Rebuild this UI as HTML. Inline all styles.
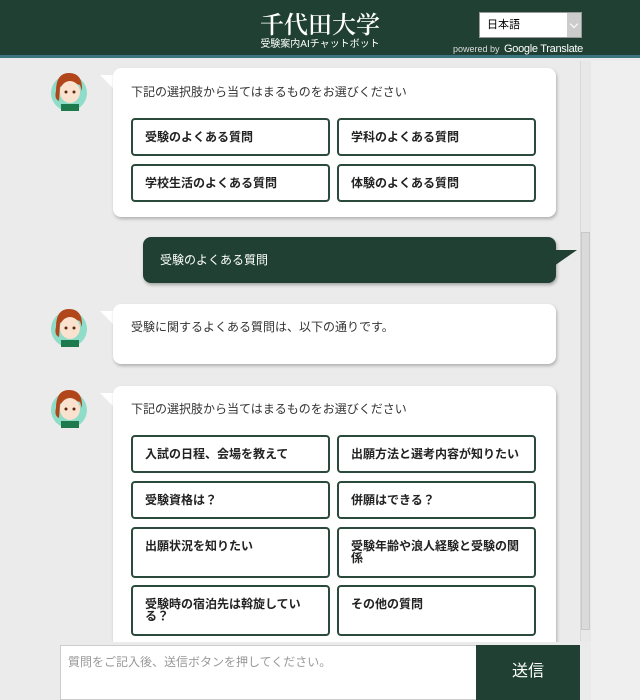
<!DOCTYPE html>
<html><head><meta charset="utf-8"><style>
*{margin:0;padding:0;box-sizing:border-box}
body{width:640px;height:700px;overflow:hidden;background:#ebebeb;font-family:"Liberation Sans","Noto Sans CJK JP",sans-serif;position:relative}
.hdr{position:absolute;left:0;top:0;width:640px;height:58px;background:#1f4033;border-bottom:3px solid #3b7580}
.title{position:absolute;left:0;width:640px;top:9px;text-align:center;color:#fff;font-family:"Noto Serif CJK SC","Liberation Serif",serif;font-size:24px;line-height:28px;font-weight:600}
.sub{position:absolute;left:0;width:640px;top:39px;text-align:center;color:#fff;font-size:10px;line-height:12px}
.sel{position:absolute;left:479px;top:12px;width:103px;height:26px;background:#fff;border:1px solid #999;font-size:11px;line-height:24px;padding-left:7px;color:#000}
.sel .arr{position:absolute;right:0;top:0;width:14px;height:24px;background:#ccc}
.sel .arr:after{content:"";position:absolute;left:4px;top:8px;width:5px;height:5px;border-right:1px solid #fff;border-bottom:1px solid #fff;transform:rotate(45deg)}
.pw{position:absolute;left:453px;top:43px;color:#ddd;font-size:9px;line-height:12px}
.pw b{font-size:11px;color:#fff;font-weight:normal;margin-left:2px;letter-spacing:-0.3px}
.right{position:absolute;left:591px;top:61px;width:49px;height:639px;background:#efefef}
.track{position:absolute;left:580px;top:61px;width:11px;height:580px;background:#e8e8e8;border-left:1px solid #d8d8d8}
.thumb{position:absolute;left:581px;top:232px;width:9px;height:398px;background:#dadada;border:1px solid #c8c8c8}
.clip{position:absolute;left:0;top:61px;width:580px;height:581px;overflow:hidden}
.bub{position:absolute;left:113px;width:443px;background:#fff;border-radius:8px;box-shadow:1px 2px 3px rgba(0,0,0,.25)}
.tail{position:absolute;left:100px;width:0;height:0;border-top:14px solid #fff;border-left:14px solid transparent}
.txt{position:absolute;left:18px;font-size:12px;color:#333;line-height:14px}
.btn{position:absolute;width:199px;border:2px solid #2a4a3c;border-radius:4px;background:#fff;font-size:12px;font-weight:bold;color:#222;padding:11px 12px 0 12px;line-height:12px}
.av{position:absolute;left:50px;width:38px;height:40px}
.user{position:absolute;left:143px;top:176px;width:413px;height:46px;background:#1f4033;border-radius:8px;box-shadow:1px 2px 3px rgba(0,0,0,.3);color:#fff;font-size:12px;line-height:46px;padding-left:17px}
.utail{position:absolute;left:554px;top:189px;width:0;height:0;border-top:16px solid #1f4033;border-right:23px solid transparent}
.in{position:absolute;left:60px;top:645px;width:417px;height:55px;background:#fff;border:1px solid #ccc;font-size:12px;color:#999;padding:7px 7px}
.send{position:absolute;left:476px;top:645px;width:104px;height:55px;background:#1f4033;color:#fff;font-size:16px;text-align:center;line-height:54px}
</style></head><body>
<div class="hdr"></div>
<div class="title">千代田大学</div>
<div class="sub">受験案内AIチャットボット</div>
<div class="sel">日本語<div class="arr"></div></div>
<div class="pw">powered by <b>Google Translate</b></div>
<div class="right"></div>
<div class="track"></div><div class="thumb"></div>

<div class="clip">
<svg class="av" style="top:10px" viewBox="0 0 38 40"><ellipse cx="19" cy="22" rx="18" ry="18" fill="#8fdcc8"/><path d="M6 20 Q6 2 19 2 Q33 2 32 20 L30 14 Q19 10 10 16 L9 30 Q4 28 6 20Z" fill="#b1461a"/><ellipse cx="20" cy="21" rx="10" ry="11" fill="#fbe2cf"/><rect x="11" y="33" width="18" height="7" fill="#1c7a4c"/><circle cx="16" cy="21" r="1.5" fill="#5a2a10"/><circle cx="24" cy="21" r="1.5" fill="#5a2a10"/></svg>
<div class="tail" style="top:14px"></div>
<div class="bub" style="top:7px;height:149px">
<div class="txt" style="top:17px">下記の選択肢から当てはまるものをお選びください</div>
<div class="btn" style="left:18px;top:50px;height:38px">受験のよくある質問</div>
<div class="btn" style="left:224px;top:50px;height:38px">学科のよくある質問</div>
<div class="btn" style="left:18px;top:96px;height:38px">学校生活のよくある質問</div>
<div class="btn" style="left:224px;top:96px;height:38px">体験のよくある質問</div>
</div>

<div class="user">受験のよくある質問</div>
<div class="utail"></div>

<svg class="av" style="top:246px" viewBox="0 0 38 40"><ellipse cx="19" cy="22" rx="18" ry="18" fill="#8fdcc8"/><path d="M6 20 Q6 2 19 2 Q33 2 32 20 L30 14 Q19 10 10 16 L9 30 Q4 28 6 20Z" fill="#b1461a"/><ellipse cx="20" cy="21" rx="10" ry="11" fill="#fbe2cf"/><rect x="11" y="33" width="18" height="7" fill="#1c7a4c"/><circle cx="16" cy="21" r="1.5" fill="#5a2a10"/><circle cx="24" cy="21" r="1.5" fill="#5a2a10"/></svg>
<div class="tail" style="top:250px"></div>
<div class="bub" style="top:243px;height:60px">
<div class="txt" style="top:16px">受験に関するよくある質問は、以下の通りです。</div>
</div>

<svg class="av" style="top:327px" viewBox="0 0 38 40"><ellipse cx="19" cy="22" rx="18" ry="18" fill="#8fdcc8"/><path d="M6 20 Q6 2 19 2 Q33 2 32 20 L30 14 Q19 10 10 16 L9 30 Q4 28 6 20Z" fill="#b1461a"/><ellipse cx="20" cy="21" rx="10" ry="11" fill="#fbe2cf"/><rect x="11" y="33" width="18" height="7" fill="#1c7a4c"/><circle cx="16" cy="21" r="1.5" fill="#5a2a10"/><circle cx="24" cy="21" r="1.5" fill="#5a2a10"/></svg>
<div class="tail" style="top:332px"></div>
<div class="bub" style="top:325px;height:272px">
<div class="txt" style="top:16px">下記の選択肢から当てはまるものをお選びください</div>
<div class="btn" style="left:18px;top:49px;height:38px">入試の日程、会場を教えて</div>
<div class="btn" style="left:224px;top:49px;height:38px">出願方法と選考内容が知りたい</div>
<div class="btn" style="left:18px;top:95px;height:38px">受験資格は？</div>
<div class="btn" style="left:224px;top:95px;height:38px">併願はできる？</div>
<div class="btn" style="left:18px;top:141px;height:51px">出願状況を知りたい</div>
<div class="btn" style="left:224px;top:141px;height:51px">受験年齢や浪人経験と受験の関係</div>
<div class="btn" style="left:18px;top:199px;height:51px">受験時の宿泊先は斡旋している？</div>
<div class="btn" style="left:224px;top:199px;height:51px">その他の質問</div>
</div>
</div>

<div class="in">質問をご記入後、送信ボタンを押してください。</div>
<div class="send">送信</div>
</body></html>
